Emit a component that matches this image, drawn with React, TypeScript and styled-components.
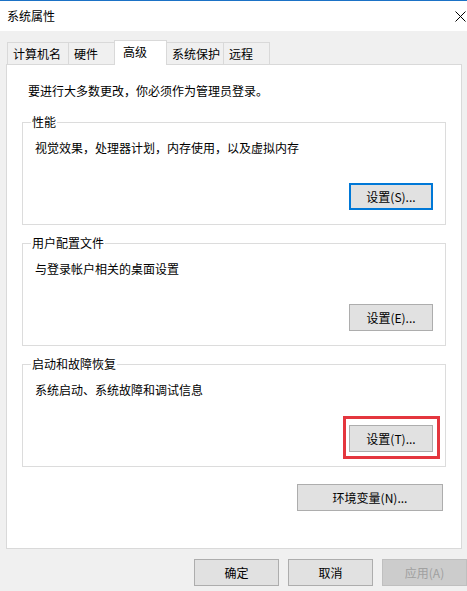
import React from "react";
import styled, { createGlobalStyle } from "styled-components";

const GlobalStyle = createGlobalStyle`
  html, body {
    margin: 0;
    padding: 0;
    background: #f0f0f0;
  }
  body {
    font-family: "Noto Sans CJK SC", "Microsoft YaHei", sans-serif;
    font-size: 12px;
    color: #000;
  }
`;

const Window = styled.div`
  width: 467px;
  height: 591px;
  overflow: hidden;
  display: flex;
  flex-direction: column;
  background: #f0f0f0;
`;

const TitleBar = styled.div`
  height: 30px;
  border-top: 1px solid #1b72c6;
  background: #fff;
  display: flex;
  align-items: center;
  justify-content: space-between;
  padding-left: 7px;
  padding-right: 1px;
  line-height: 16px;
`;

const Body = styled.div`
  padding-left: 6px;
  display: flex;
  flex-direction: column;
`;

const TabStrip = styled.div`
  height: 33px;
  display: flex;
  align-items: flex-end;
  padding-left: 2px;
  position: relative;
  z-index: 1;
`;

const Tab = styled.div<{ $width: number; $active?: boolean }>`
  box-sizing: border-box;
  width: ${(p) => p.$width}px;
  height: ${(p) => (p.$active ? 25 : 22)}px;
  margin-left: -1px;
  margin-bottom: ${(p) => (p.$active ? -1 : 0)}px;
  padding: 0 ${(p) => (p.$active ? 8 : 5)}px;
  display: flex;
  align-items: center;
  border: 1px solid #d9d9d9;
  border-bottom: none;
  background: ${(p) => (p.$active ? "#fff" : "#f0f0f0")};
  line-height: 16px;
  padding-bottom: ${(p) => (p.$active ? 2 : 0)}px;
  white-space: nowrap;
`;

const Panel = styled.div`
  box-sizing: border-box;
  width: 456px;
  height: 485px;
  border: 1px solid #d9d9d9;
  background: #fff;
  padding: 18px 15px 0;
  display: flex;
  flex-direction: column;
`;

const Intro = styled.div`
  line-height: 16px;
  padding-left: 6px;
`;

const Group = styled.fieldset<{ $first?: boolean }>`
  margin: ${(p) => (p.$first ? 15 : 10)}px 0 0;
  padding: 10px 12px 14px 8px;
  border: 1px solid #dcdcdc;
  min-inline-size: 0;
`;

const Legend = styled.legend`
  padding: 0 1px;
  line-height: 16px;
`;

const Desc = styled.div`
  line-height: 16px;
  padding-left: 4px;
`;

const ButtonRow = styled.div`
  display: flex;
  justify-content: flex-end;
  margin-top: 27px;
`;

const Button = styled.button<{ $width: number; $default?: boolean }>`
  box-sizing: border-box;
  width: ${(p) => p.$width}px;
  height: 27px;
  padding: 0;
  background: #e1e1e1;
  border: ${(p) => (p.$default ? "2px solid #0078d7" : "1px solid #adadad")};
  font-family: inherit;
  font-size: 12px;
  color: #000;
  line-height: 16px;
  &:disabled {
    background: #cccccc;
    border-color: #bfbfbf;
    color: #a0a0a0;
  }
`;

const Highlight = styled.span`
  position: relative;
  display: inline-flex;
  &::after {
    content: "";
    position: absolute;
    top: -9px;
    left: -6px;
    right: -7px;
    bottom: -7px;
    border: 3px solid #e4363e;
    pointer-events: none;
  }
`;

const EnvRow = styled.div`
  display: flex;
  justify-content: flex-end;
  margin-top: 17px;
  padding-right: 3px;
`;

const Footer = styled.div`
  display: flex;
  gap: 9px;
  margin-top: 10px;
  padding-left: 188px;
`;

const CloseIcon = () => (
  <svg width="11" height="11" viewBox="0 0 11 11">
    <path d="M0.5 0.5 L10.5 10.5 M10.5 0.5 L0.5 10.5" stroke="#000" strokeWidth="1" fill="none" />
  </svg>
);

const tabs = [
  { label: "计算机名", width: 62 },
  { label: "硬件", width: 47 },
  { label: "高级", width: 53, active: true },
  { label: "系统保护", width: 58 },
  { label: "远程", width: 47 },
];

const App = () => {
  return (
    <Window>
      <GlobalStyle />
      <TitleBar>
        <span>系统属性</span>
        <CloseIcon />
      </TitleBar>
      <Body>
        <TabStrip>
          {tabs.map((t) => (
            <Tab key={t.label} $width={t.width} $active={t.active}>
              {t.label}
            </Tab>
          ))}
        </TabStrip>
        <Panel>
          <Intro>要进行大多数更改，你必须作为管理员登录。</Intro>

          <Group $first>
            <Legend>性能</Legend>
            <Desc>视觉效果，处理器计划，内存使用，以及虚拟内存</Desc>
            <ButtonRow>
              <Button $width={84} $default>设置(S)...</Button>
            </ButtonRow>
          </Group>

          <Group>
            <Legend>用户配置文件</Legend>
            <Desc>与登录帐户相关的桌面设置</Desc>
            <ButtonRow>
              <Button $width={84}>设置(E)...</Button>
            </ButtonRow>
          </Group>

          <Group>
            <Legend>启动和故障恢复</Legend>
            <Desc>系统启动、系统故障和调试信息</Desc>
            <ButtonRow>
              <Highlight>
                <Button $width={84}>设置(T)...</Button>
              </Highlight>
            </ButtonRow>
          </Group>

          <EnvRow>
            <Button $width={146}>环境变量(N)...</Button>
          </EnvRow>
        </Panel>
        <Footer>
          <Button $width={86}>确定</Button>
          <Button $width={86}>取消</Button>
          <Button $width={86} disabled>应用(A)</Button>
        </Footer>
      </Body>
    </Window>
  );
};

export default App;
